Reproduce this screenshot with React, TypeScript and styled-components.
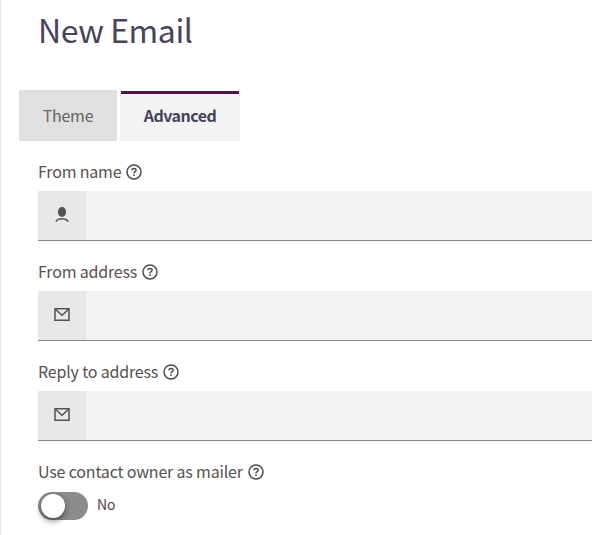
import React from "react";
import styled, { createGlobalStyle } from "styled-components";

const GlobalStyle = createGlobalStyle`
  * { box-sizing: border-box; }
  body {
    margin: 0;
    background: #fff;
    overflow: hidden;
    font-family: "Noto Sans CJK SC", "Noto Sans", sans-serif;
    color: #54524f;
  }
`;

const Page = styled.main`
  height: 535px;
  border-left: 1px solid #e5e5e5;
  padding: 8px 13px 0 18px;
`;

const Title = styled.h1`
  margin: 0 0 40px 19px;
  font-size: 32px;
  font-weight: 400;
  line-height: 42px;
  letter-spacing: -0.42px;
  color: #46435c;
`;

const Tabs = styled.div`
  display: flex;
  gap: 3px;
  height: 51px;
`;

const Tab = styled.button<{ $active?: boolean }>`
  width: ${(p) => (p.$active ? 120 : 98)}px;
  margin: ${(p) => (p.$active ? "1px 0 0" : "0")};
  padding: ${(p) => (p.$active ? "0 0 3px" : "0 0 1px")};
  border: 0 solid #f3f3f3;
  border-width: ${(p) => (p.$active ? "0 1px" : "0")};
  box-shadow: ${(p) => (p.$active ? "inset 0 3px #560f49" : "none")};
  background: ${(p) => (p.$active ? "#f3f3f3" : "#e0e0e0")};
  color: ${(p) => (p.$active ? "#46435c" : "#666461")};
  font-family: inherit;
  font-size: 16px;
  font-weight: ${(p) => (p.$active ? 700 : 400)};
  line-height: 24px;
  letter-spacing: ${(p) => (p.$active ? -0.5 : -0.25)}px;
`;

const Form = styled.form`
  padding: 18px 0 0 19px;
`;

const Field = styled.div`
  height: 100px;
`;

const Label = styled.label`
  display: flex;
  align-items: center;
  gap: 5px;
  height: 24px;
  margin-bottom: 8px;
  font-size: 16px;
  line-height: 24px;
  letter-spacing: -0.18px;
  white-space: nowrap;

  svg {
    margin-top: 1px;
  }
`;

const InputGroup = styled.div`
  display: flex;
  height: 50px;
  border-bottom: 1px solid #888;
  background: #f3f3f3;
`;

const Addon = styled.span`
  display: flex;
  flex: none;
  align-items: center;
  justify-content: center;
  width: 48px;
  padding-bottom: 3px;
  background: #e8e8e8;
`;

const Input = styled.input`
  flex: 1;
  min-width: 0;
  border: 0;
  outline: 0;
  background: transparent;
  font: inherit;
`;

const ToggleRow = styled.div`
  display: flex;
  align-items: center;
  gap: 9px;
  height: 28px;
  margin-top: 9px;
  font-size: 14px;
  line-height: 20px;
  color: #5a3d4c;
`;

const Switch = styled.span`
  display: flex;
  align-items: center;
  width: 50px;
  height: 28px;
  padding-left: 2.5px;
  border-radius: 14px;
  background: #8b8b8b;
`;

const Knob = styled.span`
  width: 24px;
  height: 24px;
  border-radius: 50%;
  background: #fff;
  box-shadow: 0 3px 6px rgba(0, 0, 0, 0.45);
`;

const SwitchText = styled.span`
  padding-bottom: 4px;
  letter-spacing: -0.2px;
`;

const HelpIcon = () => (
  <svg width="16" height="16" viewBox="0 0 16 16" fill="none" stroke="#4d4b49">
    <circle cx="8" cy="8" r="7" strokeWidth="1.5" />
    <path d="M5.9 6.3C5.9 3.8 10.1 3.8 10.1 6.2C10.1 7.7 8 7.7 8 9.4" strokeWidth="1.5" />
    <path d="M8 10.4V12" strokeWidth="1.6" />
  </svg>
);

const PersonIcon = () => (
  <svg width="16" height="18" viewBox="0 0 16 18">
    <ellipse cx="8" cy="7" rx="4.1" ry="5.1" fill="#54524f" />
    <path d="M1.8 16.6C4.4 12.9 11.6 12.9 14.2 16.6" fill="none" stroke="#54524f" strokeWidth="1.5" />
  </svg>
);

const MailIcon = () => (
  <svg width="16" height="14" viewBox="0 0 16 14" fill="none" stroke="#54524f" strokeWidth="1.5">
    <path d="M1 1.75H15V13.25H1Z" />
    <path d="M1.4 2.2L8 8.2L14.6 2.2" />
  </svg>
);

const fields = [
  { id: "from-name", label: "From name", Icon: PersonIcon },
  { id: "from-address", label: "From address", Icon: MailIcon },
  { id: "reply-to", label: "Reply to address", Icon: MailIcon },
];

export default function App() {
  return (
    <Page>
      <GlobalStyle />
      <Title>New Email</Title>
      <Tabs>
        <Tab>Theme</Tab>
        <Tab $active>Advanced</Tab>
      </Tabs>
      <Form>
        {fields.map(({ id, label, Icon }) => (
          <Field key={id}>
            <Label htmlFor={id}>
              {label}
              <HelpIcon />
            </Label>
            <InputGroup>
              <Addon>
                <Icon />
              </Addon>
              <Input id={id} />
            </InputGroup>
          </Field>
        ))}
        <Label>
          Use contact owner as mailer
          <HelpIcon />
        </Label>
        <ToggleRow>
          <Switch>
            <Knob />
          </Switch>
          <SwitchText>No</SwitchText>
        </ToggleRow>
      </Form>
    </Page>
  );
}
